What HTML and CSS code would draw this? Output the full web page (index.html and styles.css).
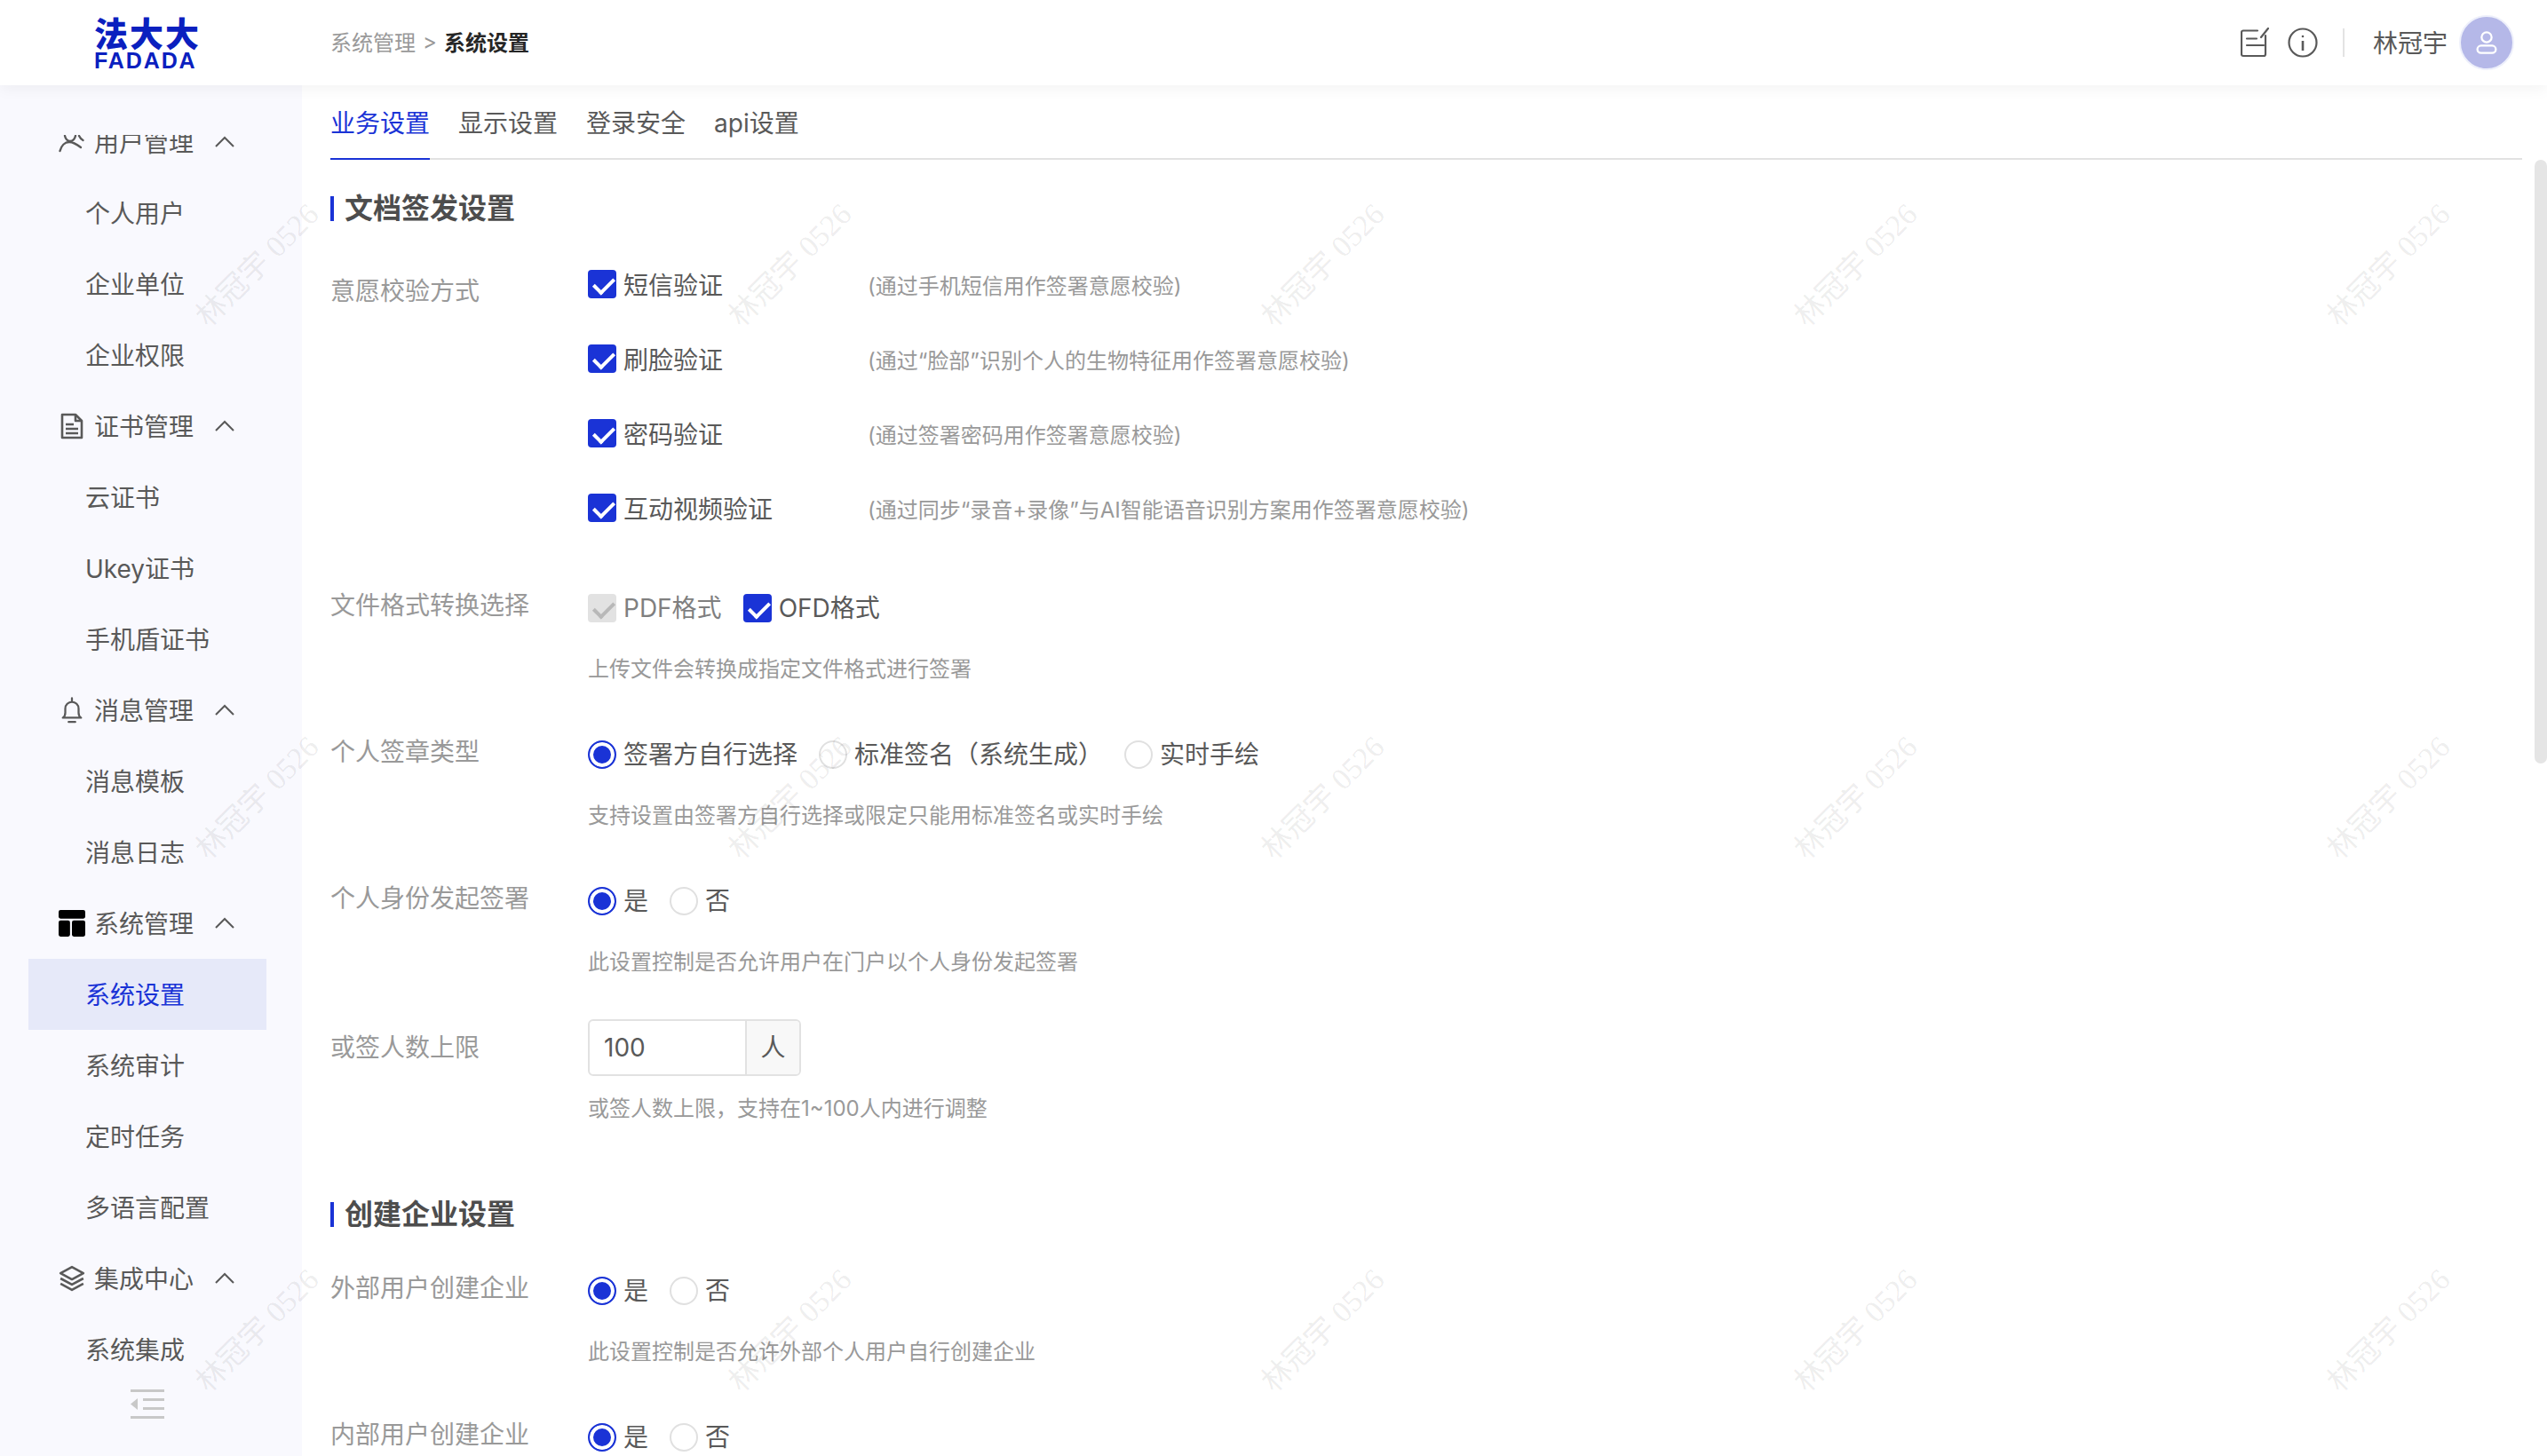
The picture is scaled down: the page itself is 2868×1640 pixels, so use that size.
FILE: index.html
```html
<!DOCTYPE html>
<html lang="zh-CN">
<head>
<meta charset="utf-8">
<title>系统设置</title>
<link rel="stylesheet" href="styles.css">
</head>
<body>
<header class="topbar">
  <div class="logo"><span class="logo-cn">法大大</span><span class="logo-en">FADADA</span></div>
  <div class="crumbs"><span>系统管理</span><span class="crumb-sep">&gt;</span><strong>系统设置</strong></div>
  <div class="top-actions">
    <svg class="i-edit" viewBox="0 0 32 34" fill="none" stroke="#595959" stroke-width="2.2" stroke-linecap="round" stroke-linejoin="round"><path d="M19 3.500H3a2 2 0 0 0-2 2V30a2 2 0 0 0 2 2h23a2 2 0 0 0 2-2V9"/><path d="M7 12.500h11M7 20h19M23 11l8-10"/></svg>
    <svg class="i-info" viewBox="0 0 34 34" fill="none" stroke="#595959" stroke-width="2.200"><circle cx="17" cy="17" r="15.500"/><path d="M17 15v11" stroke-width="2.600"/><circle cx="17" cy="10" r="1.300" fill="#595959" stroke="none"/></svg>
    <span class="top-div"></span>
    <span class="uname">林冠宇</span>
    <span class="avatar"><svg viewBox="0 0 30 32" fill="none" stroke="#fff" stroke-width="2.600"><circle cx="15" cy="9" r="6.500"/><rect x="3" y="20" width="24" height="9.500" rx="4.750"/></svg></span>
  </div>
</header>
<div class="shell">
  <aside class="side">
    <nav class="menu">
      <div class="menu-inner">
        <div class="grp"><svg class="gi" viewBox="0 0 30 30" fill="none" stroke="#595959" stroke-width="2.400" stroke-linecap="round"><path d="M1.500 25C3 19 7 15 12 15c5 0 9 3 13 6"/><path d="M7 8c1 4 3.500 6 6 6s5-2 6-6M23 8c1 2 2.500 4 4.500 5"/></svg><span>用户管理</span><svg class="chev" viewBox="0 0 22 13" fill="none" stroke="#595959" stroke-width="2"><path d="M1 12 11 2l10 10"/></svg></div>
        <a class="item">个人用户</a><a class="item">企业单位</a><a class="item">企业权限</a>
        <div class="grp"><svg class="gi" viewBox="0 0 26 30" fill="none" stroke="#595959" stroke-width="2.600" stroke-linejoin="round"><path d="M2 2h15l7 7v19H2z"/><path d="M17 2v7h7M6 13h9M6 18h14M6 23h14"/></svg><span>证书管理</span><svg class="chev" viewBox="0 0 22 13" fill="none" stroke="#595959" stroke-width="2"><path d="M1 12 11 2l10 10"/></svg></div>
        <a class="item">云证书</a><a class="item">Ukey证书</a><a class="item">手机盾证书</a>
        <div class="grp"><svg class="gi" viewBox="0 0 26 32" fill="none" stroke="#595959" stroke-width="2.400" stroke-linecap="round" stroke-linejoin="round"><path d="M2 25c2-1 3-3 3-6v-5a8 8 0 0 1 16 0v5c0 3 1 5 3 6z"/><path d="M13 1.500v3M9 30h8"/></svg><span>消息管理</span><svg class="chev" viewBox="0 0 22 13" fill="none" stroke="#595959" stroke-width="2"><path d="M1 12 11 2l10 10"/></svg></div>
        <a class="item">消息模板</a><a class="item">消息日志</a>
        <div class="grp"><svg class="gi" viewBox="0 0 28 28" fill="#000"><rect x="0" y="0" width="28" height="9" rx="2"/><rect x="0" y="11" width="12" height="17" rx="2"/><rect x="14" y="11" width="14" height="17" rx="2"/></svg><span>系统管理</span><svg class="chev" viewBox="0 0 22 13" fill="none" stroke="#595959" stroke-width="2"><path d="M1 12 11 2l10 10"/></svg></div>
        <a class="item active">系统设置</a><a class="item">系统审计</a><a class="item">定时任务</a><a class="item">多语言配置</a>
        <div class="grp"><svg class="gi" viewBox="0 0 28 28" fill="none" stroke="#595959" stroke-width="2.400" stroke-linejoin="round"><path d="M14 2 26 8.500 14 15 2 8.500z"/><path d="M2 14l12 6.500L26 14M2 19.500 14 26l12-6.500"/></svg><span>集成中心</span><svg class="chev" viewBox="0 0 22 13" fill="none" stroke="#595959" stroke-width="2"><path d="M1 12 11 2l10 10"/></svg></div>
        <a class="item">系统集成</a>
      </div>
    </nav>
    <div class="collapse"><svg viewBox="0 0 38 33" fill="#c8c8c8"><rect x="0" y="0" width="38" height="3"/><rect x="14" y="10" width="24" height="3"/><rect x="14" y="20" width="24" height="3"/><rect x="0" y="30" width="38" height="3"/><path d="M8 10v13L0 16.500z"/></svg></div>
  </aside>
  <main class="main">
    <div class="tabs"><a class="tab on">业务设置</a><a class="tab">显示设置</a><a class="tab">登录安全</a><a class="tab">api设置</a></div>
    <h2 class="sec">文档签发设置</h2>

    <div class="row r-verify">
      <div class="lbl">意愿校验方式</div>
      <div class="verify">
        <label class="vline"><span class="cb on"></span><span class="vt">短信验证</span><span class="vd">(通过手机短信用作签署意愿校验)</span></label>
        <label class="vline"><span class="cb on"></span><span class="vt">刷脸验证</span><span class="vd">(通过“脸部”识别个人的生物特征用作签署意愿校验)</span></label>
        <label class="vline"><span class="cb on"></span><span class="vt">密码验证</span><span class="vd">(通过签署密码用作签署意愿校验)</span></label>
        <label class="vline"><span class="cb on"></span><span class="vt">互动视频验证</span><span class="vd">(通过同步“录音+录像”与AI智能语音识别方案用作签署意愿校验)</span></label>
      </div>
    </div>

    <div class="row">
      <div class="lbl">文件格式转换选择</div>
      <div class="ctl">
        <div class="opts"><label class="opt dis"><span class="cb off"></span>PDF格式</label><label class="opt"><span class="cb on"></span>OFD格式</label></div>
        <p class="hint">上传文件会转换成指定文件格式进行签署</p>
      </div>
    </div>

    <div class="row">
      <div class="lbl">个人签章类型</div>
      <div class="ctl">
        <div class="opts"><label class="opt"><span class="rd on"></span>签署方自行选择</label><label class="opt"><span class="rd"></span>标准签名（系统生成）</label><label class="opt"><span class="rd"></span>实时手绘</label></div>
        <p class="hint">支持设置由签署方自行选择或限定只能用标准签名或实时手绘</p>
      </div>
    </div>

    <div class="row">
      <div class="lbl">个人身份发起签署</div>
      <div class="ctl">
        <div class="opts"><label class="opt"><span class="rd on"></span>是</label><label class="opt"><span class="rd"></span>否</label></div>
        <p class="hint">此设置控制是否允许用户在门户以个人身份发起签署</p>
      </div>
    </div>

    <div class="row r-input">
      <div class="lbl">或签人数上限</div>
      <div class="ctl">
        <div class="field"><span class="val">100</span><span class="addon">人</span></div>
        <p class="hint">或签人数上限，支持在1~100人内进行调整</p>
      </div>
    </div>

    <h2 class="sec sec-2">创建企业设置</h2>

    <div class="row">
      <div class="lbl">外部用户创建企业</div>
      <div class="ctl">
        <div class="opts"><label class="opt"><span class="rd on"></span>是</label><label class="opt"><span class="rd"></span>否</label></div>
        <p class="hint">此设置控制是否允许外部个人用户自行创建企业</p>
      </div>
    </div>

    <div class="row r-last">
      <div class="lbl">内部用户创建企业</div>
      <div class="ctl">
        <div class="opts"><label class="opt"><span class="rd on"></span>是</label><label class="opt"><span class="rd"></span>否</label></div>
      </div>
    </div>
  </main>
  <div class="thumb"></div>
</div>
<div class="marks" aria-hidden="true">
  <div class="marks-grid">
    <span>林冠宇 0526</span><span>林冠宇 0526</span><span>林冠宇 0526</span><span>林冠宇 0526</span><span>林冠宇 0526</span>
    <span>林冠宇 0526</span><span>林冠宇 0526</span><span>林冠宇 0526</span><span>林冠宇 0526</span><span>林冠宇 0526</span>
    <span>林冠宇 0526</span><span>林冠宇 0526</span><span>林冠宇 0526</span><span>林冠宇 0526</span><span>林冠宇 0526</span>
  </div>
</div>
</body>
</html>
```
FILE: styles.css
```css
* { box-sizing: border-box; }
html, body { margin: 0; height: 100%; overflow: hidden; }
body { position: relative; width: 2868px; height: 1640px; background: #fff; color: #595959; font-family: Inter, "Noto Sans CJK SC", sans-serif; font-size: 28px; }

.topbar { position: relative; z-index: 2; height: 96px; display: flex; align-items: center; background: #fff; box-shadow: 0 4px 16px rgba(0,0,0,.05); }
.logo { width: 372px; flex: none; padding-left: 106px; display: flex; flex-direction: column; color: #0a20bf; }
.logo-cn { font-family: "Noto Sans CJK SC", sans-serif; font-weight: 900; font-size: 38px; line-height: 36px; letter-spacing: 2px; white-space: nowrap; }
.logo-en { font-family: "Liberation Sans", sans-serif; font-weight: 700; font-size: 25px; line-height: 20px; margin-top: 4px; letter-spacing: 1.900px; white-space: nowrap; }
.crumbs { display: flex; align-items: center; font-size: 24px; color: #999; margin-top: -3px; }
.crumb-sep { margin: 0 8px; }
.crumbs strong { color: #262626; font-weight: 700; }
.top-actions { margin-left: auto; padding-right: 37px; display: flex; align-items: center; }
.i-edit { width: 32px; height: 34px; margin-right: 21px; }
.i-info { width: 34px; height: 34px; margin-right: 28px; }
.top-div { width: 2px; height: 32px; background: #e3e3e3; margin-right: 32px; }
.uname { font-size: 28px; width: 84px; margin-right: 13px; padding-bottom: 2px; white-space: nowrap; }
.avatar { width: 62px; height: 62px; border-radius: 50%; background: #b5b8e8; border: 2px solid #eef0fb; display: flex; align-items: center; justify-content: center; }
.avatar svg { width: 26px; height: 28px; }

.shell { display: flex; height: 1544px; position: relative; }
.side { width: 340px; flex: none; background: #f9f9fe; padding-top: 56px; display: flex; flex-direction: column; }
.menu { height: 1408px; overflow: hidden; flex: none; }
.menu-inner { margin-top: -32px; }
.grp { height: 80px; display: flex; align-items: center; padding-left: 66px; }
.gi { width: 30px; height: 30px; flex: none; margin-right: 10px; }
.grp span { width: 112px; padding-bottom: 3px; }
.chev { width: 22px; height: 13px; margin-left: 24px; margin-bottom: 2px; }
.item { display: flex; align-items: center; height: 80px; margin: 0 40px 0 32px; padding: 0 0 3px 64px; }
.item.active { background: #e6e9f9; color: #1a33d6; }
.collapse { display: flex; justify-content: center; margin: 5px 0 0 -8px; }
.collapse svg { width: 38px; height: 33px; }

.main { flex: 1; min-width: 0; padding: 0 28px 0 32px; overflow: hidden; }
.tabs { display: flex; gap: 32px; height: 84px; border-bottom: 2px solid #e2e2e2; }
.tab { height: 84px; display: flex; align-items: center; border-bottom: 2px solid transparent; }
.tab.on { color: #1a33d6; border-bottom-color: #1a33d6; }
.sec { margin: 39px 0 0; height: 32px; display: flex; align-items: center; font-size: 32px; line-height: 32px; font-weight: 700; color: #4d4d4d; }
.sec::before { content: ""; width: 4px; height: 28px; background: #1a33d6; margin-right: 12px; flex: none; }
.sec-2 { margin: 39px 0 38px; }

.row { display: flex; height: 165px; }
.lbl { width: 290px; flex: none; color: #999; height: 64px; line-height: 58px; white-space: nowrap; }
.ctl { flex: 1; min-width: 0; }
.opts { height: 64px; display: flex; align-items: center; gap: 24px; }
.opt { display: flex; align-items: center; gap: 8px; white-space: nowrap; line-height: 40px; }
.opt.dis { color: #7f7f7f; }
.hint { margin: 23px 0 0; font-size: 24px; line-height: 28px; color: #999; }

.r-verify { height: 360px; margin-top: 42px; }
.r-verify .lbl { line-height: 70px; }
.verify { flex: 1; }
.vline { height: 84px; display: flex; align-items: center; }
.vline:first-child { margin-top: -15px; }
.vt { margin-left: 8px; width: 275px; }
.vd { font-size: 24px; color: #999; white-space: nowrap; }
.r-last { height: auto; }

.cb { width: 32px; height: 32px; flex: none; border-radius: 4px; position: relative; display: block; }
.cb.on { background: #1a33d6; }
.cb.off { background: #e2e2e2; }
.cb::after { content: ""; position: absolute; left: 11px; top: 4px; width: 10px; height: 19px; border: solid #fff; border-width: 0 4px 4px 0; transform: rotate(45deg); }
.cb.off::after { border-color: #b8b8b8; }
.rd { width: 32px; height: 32px; flex: none; border-radius: 50%; border: 2px solid #e0e0e0; background: #fff; display: block; }
.rd.on { border-color: #1a33d6; background: #1a33d6; box-shadow: inset 0 0 0 4px #fff; }

.field { width: 240px; height: 64px; display: flex; border: 2px solid #e2e2e2; border-radius: 6px; overflow: hidden; }
.val { flex: 1; padding-left: 16px; line-height: 60px; }
.addon { width: 61px; background: #f8f8f8; border-left: 2px solid #e2e2e2; text-align: center; line-height: 60px; }
.r-input .lbl { line-height: 64px; }

.thumb { position: absolute; right: 0; top: 84px; width: 14px; height: 680px; background: #e5e5e5; border-radius: 7px; }

.marks { position: absolute; z-index: 1; inset: 0; overflow: hidden; pointer-events: none; }
.marks-grid { margin: -4px 0 0 -13px; display: grid; grid-template-columns: repeat(5, 600px); grid-auto-rows: 600px; }
.marks span { display: flex; align-items: center; justify-content: center; transform: rotate(-45deg); font-family: "Liberation Serif", "Noto Sans CJK SC", serif; font-size: 34px; color: rgba(0,0,0,.085); white-space: nowrap; }
```
